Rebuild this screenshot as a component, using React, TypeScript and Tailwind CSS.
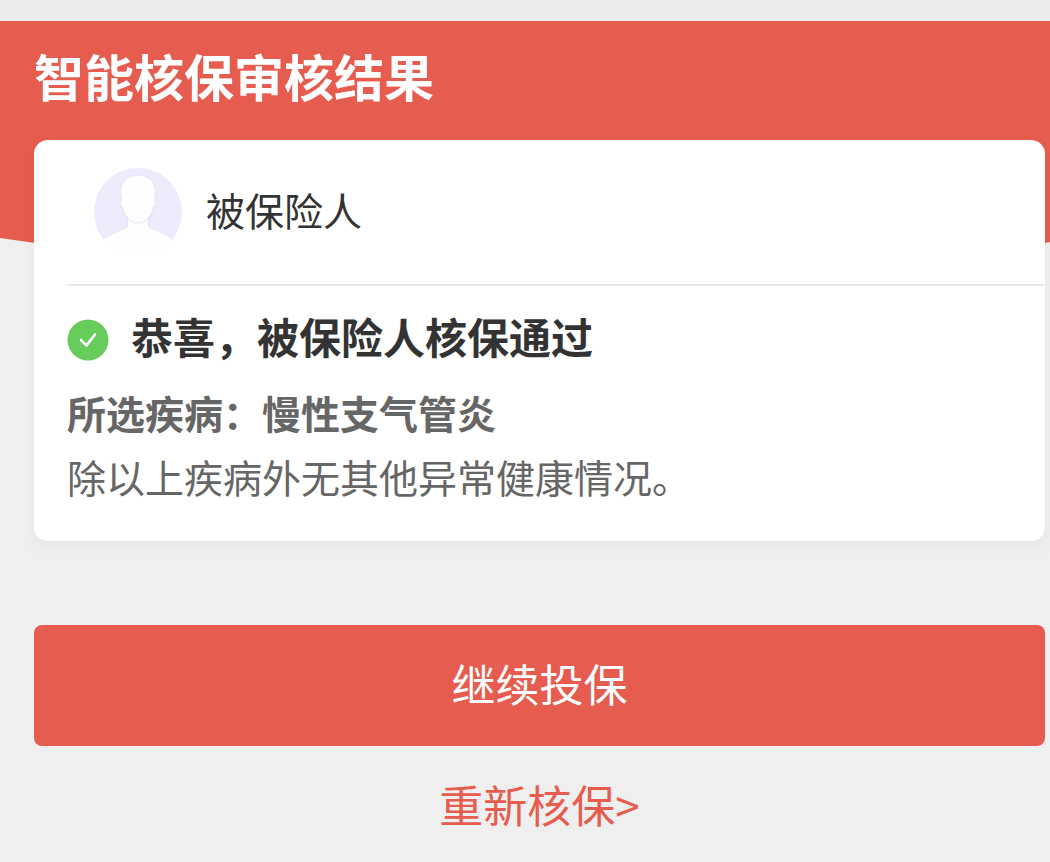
/**
 * Underwriting Result Page
 *
 * Shows the outcome of the smart underwriting check for the insured person,
 * with a button to continue and a link to run the check again.
 */

const details = {
  insured: "被保险人",
  result: "恭喜，被保险人核保通过",
  disease: "所选疾病：慢性支气管炎",
  note: "除以上疾病外无其他异常健康情况。",
};

function Avatar() {
  return (
    <svg viewBox="0 0 88 88" className="w-[88px] h-[88px] shrink-0" aria-hidden="true">
      <defs>
        <clipPath id="avatar-circle">
          <circle cx="44" cy="44" r="44" />
        </clipPath>
        <filter id="avatar-shade" x="-20%" y="-20%" width="140%" height="140%">
          <feDropShadow dx="0" dy="1" stdDeviation="1.5" floodColor="#d5cff0" floodOpacity="0.6" />
        </filter>
      </defs>
      <g clipPath="url(#avatar-circle)">
        <rect width="88" height="88" fill="#eeebfd" />
        <path
          d="M34 42h20v15c0 2 1 3 3 4 8 3 15 6 21 10l14 19H-4l14-19c6-4 13-7 21-10 2-1 3-2 3-4z"
          fill="#fefefe"
          filter="url(#avatar-shade)"
        />
        <path
          d="M44 8c11 0 17 7 17 16l-1 9c2 1 1 4-1 7-2 8-8 14-15 14s-13-6-15-14c-2-3-3-6-1-7l-1-9c0-9 6-16 17-16z"
          fill="#fefefe"
          filter="url(#avatar-shade)"
        />
      </g>
    </svg>
  );
}

function PassedIcon() {
  return (
    <svg viewBox="0 0 42 42" className="w-[42px] h-[42px] shrink-0" aria-hidden="true">
      <circle cx="21" cy="21" r="20.5" fill="#66cd5b" />
      <path
        d="M14 21l5.5 5.5L28 15.5"
        fill="none"
        stroke="#fff"
        strokeWidth="2.6"
        strokeLinecap="round"
        strokeLinejoin="round"
      />
    </svg>
  );
}

export default function App() {
  return (
    <div className="min-h-screen bg-[#efefef] font-['Noto_Sans_CJK_SC',sans-serif]">
      <div className="h-[21px] bg-[#ececec]" />

      {/* Curved header, the card overlaps its lower part */}
      <header className="h-[254px] bg-[#e65c4f] pl-[34px] pt-6 [clip-path:ellipse(99%_100%_at_51.4%_0)]">
        <h1 className="text-[50px] leading-[60px] font-bold text-white">智能核保审核结果</h1>
      </header>

      <main className="relative -mt-[135px] pl-[34px] pr-[5px]">
        {/* Result card */}
        <section className="bg-white rounded-[14px] pl-[33px] pb-[35px] shadow-[0_6px_16px_rgba(0,0,0,0.04)]">
          <div className="flex items-center gap-6 pl-[27px] py-7 border-b-2 border-[#e6e6e6]">
            <Avatar />
            <span className="pb-1.5 text-[39px] leading-[56px] text-[#333]">{details.insured}</span>
          </div>

          <div className="flex items-center gap-[22px] pt-5">
            <PassedIcon />
            <h2 className="pb-2 text-[42px] leading-[60px] font-bold text-[#333]">{details.result}</h2>
          </div>

          <p className="mt-2 text-[39px] leading-[60px] font-bold text-[#666]">{details.disease}</p>
          <p className="mt-1 text-[39px] leading-[60px] text-[#666]">{details.note}</p>
        </section>

        {/* Actions */}
        <button
          type="button"
          className="block w-full h-[121px] mt-[84px] pb-1.5 rounded-lg bg-[#e65c4f] text-[44px] leading-[60px] text-white"
        >
          继续投保
        </button>
        <div className="mt-7 text-center">
          <a href="#" className="text-[44px] leading-[60px] text-[#e65c4f]">
            重新核保&gt;
          </a>
        </div>
      </main>
    </div>
  );
}
